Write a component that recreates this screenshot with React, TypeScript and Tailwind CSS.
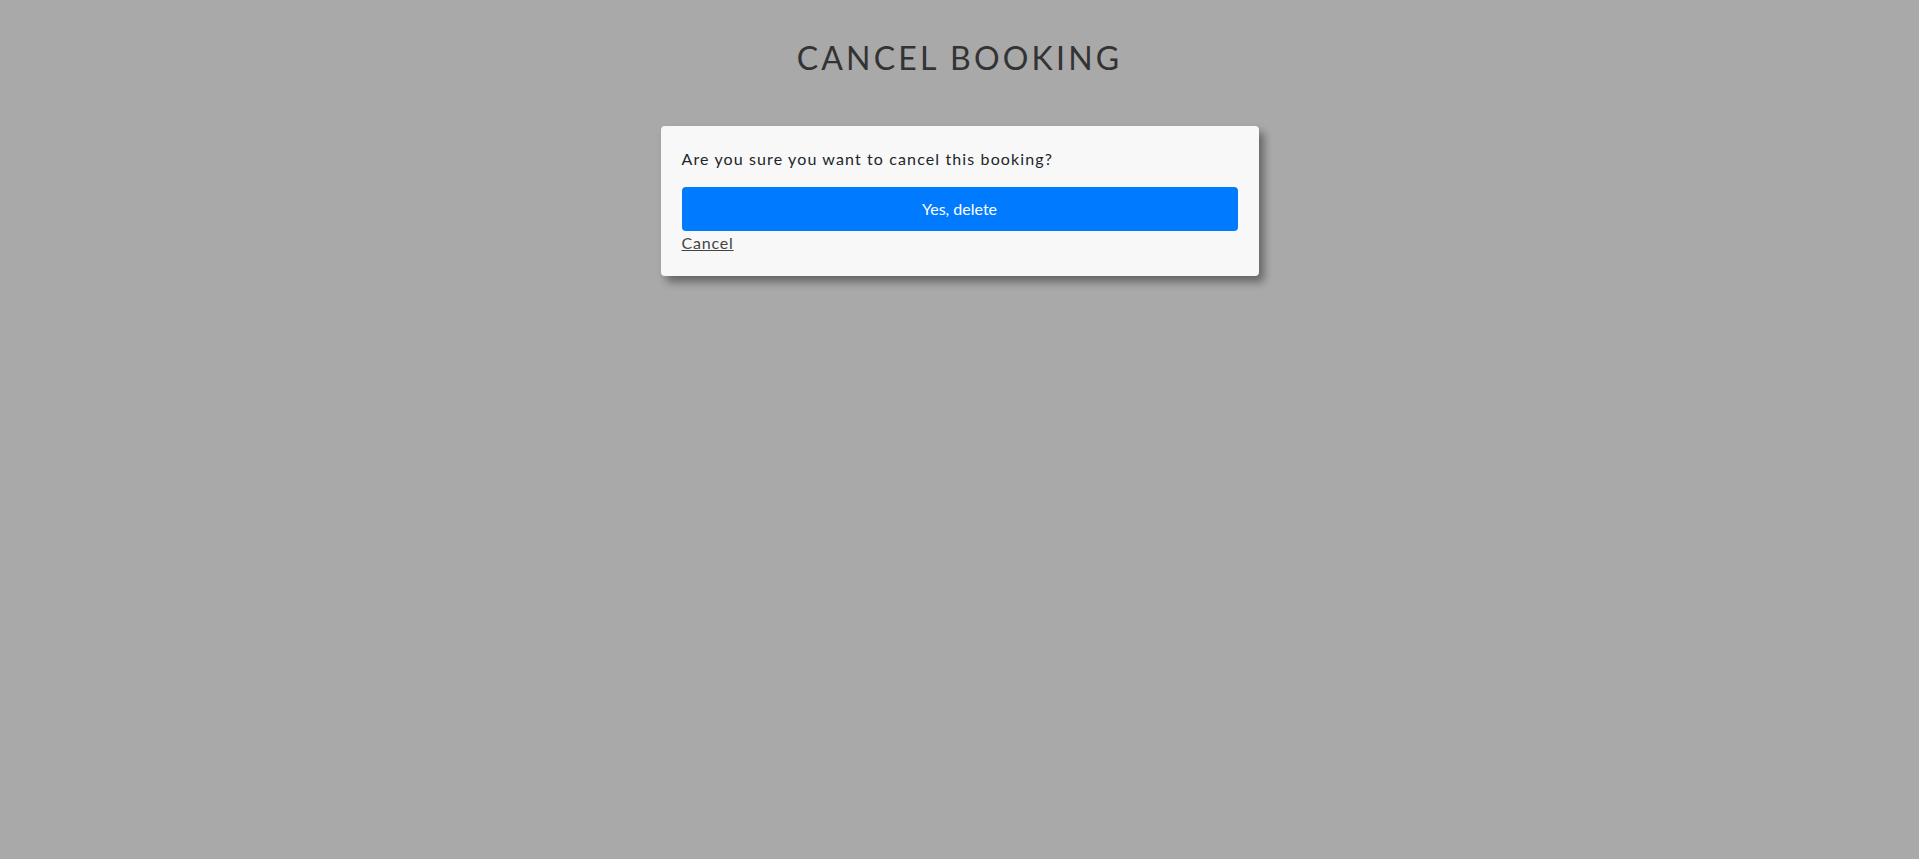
export default function App() {
  return (
    <div
      className="min-h-[859px] w-full bg-[#a9a9a9] flex flex-col items-center"
      style={{ fontFamily: "Lato, 'Open Sans', sans-serif" }}
    >
      <h1 className="mt-[38px] text-[32px] leading-[40px] tracking-[0.1em] text-[#333333] font-normal">
        CANCEL BOOKING
      </h1>
      <div className="mt-[48px] w-[598px] rounded-[4px] bg-[#f8f8f8] p-[21px] pb-[21px] shadow-[5px_6px_9px_rgba(0,0,0,0.4)]">
        <p className="text-[16px] leading-6 tracking-[0.07em] text-[#212529]">
          Are you sure you want to cancel this booking?
        </p>
        <button className="mt-4 h-[44px] w-full rounded-[4px] bg-[#007bff] text-[16px] text-white">
          Yes, delete
        </button>
        <div>
          <a href="#" className="text-[16px] leading-6 tracking-[0.05em] text-[#444444] underline">
            Cancel
          </a>
        </div>
      </div>
    </div>
  );
}
